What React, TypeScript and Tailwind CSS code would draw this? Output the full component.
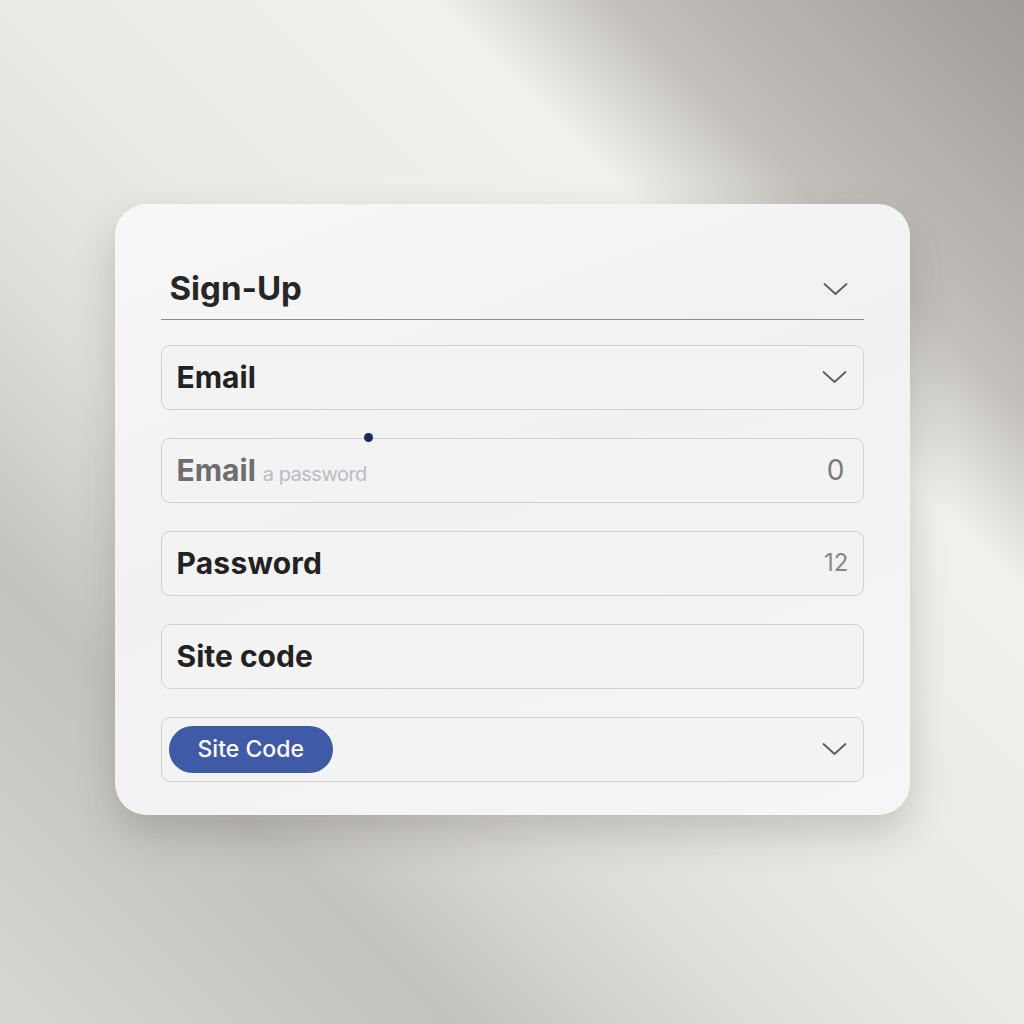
const font = { fontFamily: "Inter, 'Liberation Sans', sans-serif" };

function Chevron() {
  return (
    <svg width="25" height="14" viewBox="0 0 25 14" fill="none" className="text-[#5c5c5c]">
      <polyline points="1.5,2 12.5,12 23.5,2" stroke="currentColor" strokeWidth="1.8" strokeLinecap="round" strokeLinejoin="round" />
    </svg>
  );
}

export default function App() {
  return (
    <div
      style={font}
      className="min-h-screen w-full flex items-center justify-center pb-[6px] bg-[linear-gradient(45deg,#d8d6d1_0%,#c4c2bd_22%,#dedcd8_36%,#ebeae6_50%,#efeeea_64%,#f2f1ed_71%,#c3c0bb_80%,#a09d98_100%)]"
    >
      <div className="w-[795px] h-[611px] rounded-[32px] bg-[linear-gradient(160deg,#f7f7f7_0%,#f1f1f1_45%,#f6f6f6_100%)] shadow-[0_18px_40px_rgba(60,55,50,0.22)] px-[46px] pt-[46px] pb-[33px] flex flex-col">
        {/* Header */}
        <div className="h-[70px] pt-[10px] flex items-center justify-between border-b border-[#8c8c8c] pl-[9px] pr-[16px]">
          <span className="text-[33px] font-bold text-[#262626]">Sign-Up</span>
          <Chevron />
        </div>

        <div className="mt-[25px] flex flex-col gap-[28px]">
          <div className="h-[65px] rounded-[9px] border border-[#d2d2d2] bg-[#f3f3f3] flex items-center justify-between pl-[15px] pr-[16px]">
            <span className="text-[30px] font-bold text-[#222]">Email</span>
            <Chevron />
          </div>

          <div className="relative h-[65px] rounded-[9px] border border-[#d2d2d2] bg-[#f3f3f3] flex items-center justify-between pl-[15px] pr-[17px]">
            <span className="absolute left-[202px] -top-[6px] w-[9px] h-[9px] rounded-full bg-[#1c2a55]" />
            <div className="flex items-baseline gap-[7px]">
              <span className="text-[30px] font-bold text-[#6e6e6e]">Email</span>
              <span className="text-[20px] text-[#b9bcc6] tracking-[-0.5px]">a password</span>
            </div>
            <span className="text-[28px] text-[#7a7a7a] pr-[1px]">0</span>
          </div>

          <div className="h-[65px] rounded-[9px] border border-[#d2d2d2] bg-[#f3f3f3] flex items-center justify-between pl-[15px] pr-[14px]">
            <span className="text-[30px] font-bold text-[#222] tracking-[0.2px]">Password</span>
            <span className="text-[24px] text-[#888]">12</span>
          </div>

          <div className="h-[65px] rounded-[9px] border border-[#d2d2d2] bg-[#f3f3f3] flex items-center pl-[15px] pr-[17px]">
            <span className="text-[30px] font-bold text-[#222]">Site code</span>
          </div>

          <div className="h-[65px] rounded-[9px] border border-[#d2d2d2] bg-[#f3f3f3] flex items-center justify-between pl-[7px] pr-[16px]">
            <span className="h-[47px] px-[29px] rounded-full bg-[#3f5ba8] text-white text-[23px] font-medium flex items-center">
              Site Code
            </span>
            <Chevron />
          </div>
        </div>
      </div>
    </div>
  );
}
